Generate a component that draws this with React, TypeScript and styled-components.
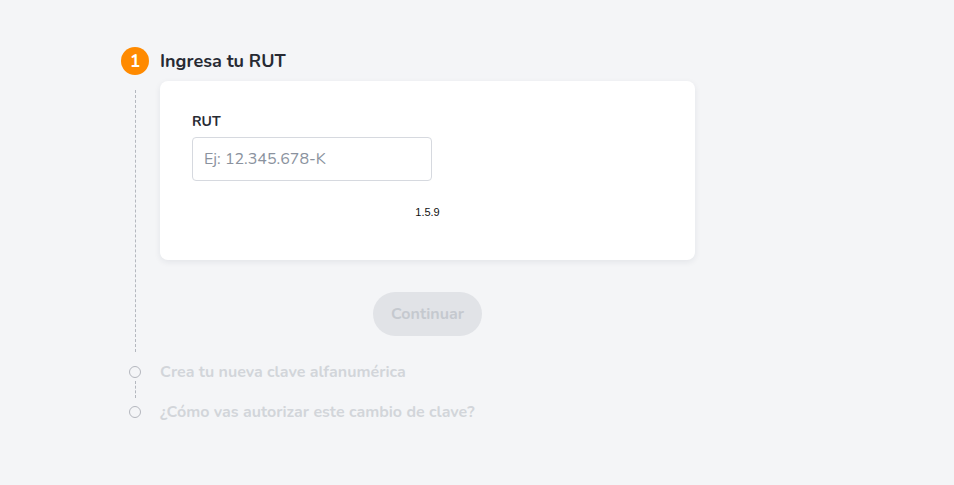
import { FC } from 'react'
import styled, { createGlobalStyle } from 'styled-components'

const GlobalStyle = createGlobalStyle`
  html, body {
    margin: 0;
    padding: 0;
    background: #f4f5f7;
    font-family: 'Nunito', 'Lato', 'Open Sans', sans-serif;
  }
`

type StepState = 'active' | 'pending'

const Page = styled.main`
  min-height: 485px;
  box-sizing: border-box;
  padding: 47px 0 0 121px;
`

const Steps = styled.ol`
  list-style: none;
  margin: 0;
  padding: 0;
  width: 574px;
`

const Step = styled.li<{ $pad: number }>`
  display: grid;
  grid-template-columns: 28px 1fr;
  column-gap: 11px;
  .step_body {
    padding-bottom: ${(p) => p.$pad}px;
  }
`

const Rail = styled.div<{ $state: StepState }>`
  display: flex;
  flex-direction: column;
  align-items: center;
  padding-top: ${(p) => (p.$state === 'active' ? 0 : 4)}px;
`

const Marker = styled.span<{ $state: StepState }>`
  box-sizing: border-box;
  display: flex;
  align-items: center;
  justify-content: center;
  border-radius: 50%;
  flex-shrink: 0;
  ${(p) =>
    p.$state === 'active'
      ? `
    width: 28px;
    height: 28px;
    background: #ff8a00;
    color: #fff;
    font-weight: 700;
    font-size: 17px;
  `
      : `
    width: 12px;
    height: 12px;
    border: 1px solid #b4b7be;
    background: transparent;
  `}
`

const Connector = styled.span<{ $top: number; $bottom: number }>`
  flex: 1;
  width: 0;
  margin-top: ${(p) => p.$top}px;
  margin-bottom: ${(p) => p.$bottom}px;
  border-left: 1px dashed #b4b8bf;
`

const Title = styled.h2<{ $state: StepState }>`
  margin: 0;
  font-weight: 700;
  ${(p) =>
    p.$state === 'active'
      ? `
    font-size: 18px;
    line-height: 28px;
    color: #272a33;
  `
      : `
    font-size: 16px;
    line-height: 20px;
    color: #d2d5da;
  `}
`

const Card = styled.section`
  margin-top: 6px;
  background: #fff;
  border-radius: 8px;
  box-shadow: 0 2px 6px rgba(30, 40, 60, 0.08);
  height: 179px;
  box-sizing: border-box;
  padding: 31px 32px 0;
`

const Label = styled.label`
  display: block;
  font-size: 14px;
  line-height: 20px;
  font-weight: 700;
  color: #272a33;
`

const Input = styled.input`
  display: block;
  margin-top: 5px;
  box-sizing: border-box;
  width: 240px;
  height: 44px;
  border: 1px solid #d6d9df;
  border-radius: 4px;
  padding: 0 11px;
  font-family: inherit;
  font-size: 16px;
  color: #272a33;
  outline: none;
  &::placeholder {
    color: #8a929e;
  }
`

const Version = styled.p`
  margin: 24px 0 0;
  text-align: center;
  font-family: 'Liberation Sans', Arial, sans-serif;
  font-size: 11px;
  line-height: 14px;
  color: #111;
`

const Actions = styled.div`
  display: flex;
  justify-content: center;
  margin-top: 32px;
`

const Button = styled.button`
  height: 44px;
  padding: 0 18px;
  border: none;
  border-radius: 22px;
  background: #e1e3e7;
  color: #c5c9cf;
  font-family: inherit;
  font-size: 16px;
  font-weight: 700;
  cursor: not-allowed;
`

const App: FC = () => {
  return (
    <>
      <GlobalStyle />
      <Page>
        <Steps>
          <Step $pad={26}>
            <Rail $state='active'>
              <Marker $state='active'>1</Marker>
              <Connector $top={15} $bottom={10} />
            </Rail>
            <div className='step_body'>
              <Title $state='active'>Ingresa tu RUT</Title>
              <Card>
                <Label htmlFor='rut'>RUT</Label>
                <Input id='rut' type='text' placeholder='Ej: 12.345.678-K' />
                <Version>1.5.9</Version>
              </Card>
              <Actions>
                <Button disabled>Continuar</Button>
              </Actions>
            </div>
          </Step>
          <Step $pad={20}>
            <Rail $state='pending'>
              <Marker $state='pending' />
              <Connector $top={3} $bottom={4} />
            </Rail>
            <div className='step_body'>
              <Title $state='pending'>Crea tu nueva clave alfanumérica</Title>
            </div>
          </Step>
          <Step $pad={0}>
            <Rail $state='pending'>
              <Marker $state='pending' />
            </Rail>
            <div className='step_body'>
              <Title $state='pending'>¿Cómo vas autorizar este cambio de clave?</Title>
            </div>
          </Step>
        </Steps>
      </Page>
    </>
  )
}

export default App
